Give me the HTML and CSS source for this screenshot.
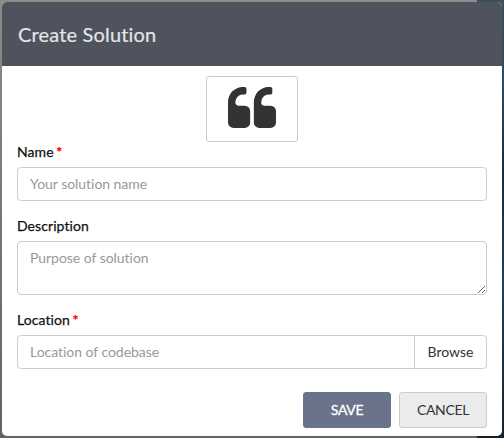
FILE: index.html
```html
<!DOCTYPE html>
<html lang="en">
<head>
<meta charset="utf-8">
<title>Create Solution</title>
<link rel="stylesheet" href="styles.css">
</head>
<body>
<main class="modal">
  <header class="modal-header"><h1>Create Solution</h1></header>
  <form class="modal-body">
    <div class="icon-box">
      <svg class="quote" viewBox="0 128 1664 1408" preserveAspectRatio="none" aria-hidden="true">
        <path d="M768 960v384q0 80-56 136t-136 56h-384q-80 0-136-56t-56-136v-704q0-104 40.5-198.5t109.5-163.5 163.5-109.5 198.5-40.5h64q26 0 45 19t19 45v128q0 26-19 45t-45 19h-64q-106 0-181 75t-75 181v32q0 40 28 68t68 28h224q80 0 136 56t56 136zm896 0v384q0 80-56 136t-136 56h-384q-80 0-136-56t-56-136v-704q0-104 40.5-198.5t109.5-163.5 163.5-109.5 198.5-40.5h64q26 0 45 19t19 45v128q0 26-19 45t-45 19h-64q-106 0-181 75t-75 181v32q0 40 28 68t68 28h224q80 0 136 56t56 136z"/>
      </svg>
    </div>
    <div class="field">
      <label for="name">Name <span class="required">*</span></label>
      <input class="control" id="name" type="text" placeholder="Your solution name">
    </div>
    <div class="field">
      <label for="description">Description</label>
      <textarea class="control area" id="description" placeholder="Purpose of solution"></textarea>
    </div>
    <div class="field">
      <label for="location">Location <span class="required">*</span></label>
      <div class="group">
        <input class="control" id="location" type="text" placeholder="Location of codebase">
        <button class="browse" type="button">Browse</button>
      </div>
    </div>
    <footer class="actions">
      <button class="btn save" type="button">SAVE</button>
      <button class="btn cancel" type="button">CANCEL</button>
    </footer>
  </form>
</main>
</body>
</html>
```
FILE: styles.css
```css
* { box-sizing: border-box; font-variant-ligatures: none; }
html { height: 100%; }
body {
  margin: 0;
  height: 438px;
  padding: 2px;
  overflow: hidden;
  font: 14px/20px Lato, sans-serif;
  color: #111;
  background:
    linear-gradient(#3b4e5b, #354b5b 18%, #1b2b38 40%, #273f50 65%, #17212b) right / 27px 100% no-repeat,
    linear-gradient(#8c8c8a, #777 50%, #656263);
}
.modal {
  width: 500px;
  height: 434px;
  border-radius: 5px;
  overflow: hidden;
  background: #fff;
}
.modal-header {
  height: 64px;
  padding: 0 16px;
  display: flex;
  align-items: center;
  background: #4f535e;
}
h1 {
  margin: 0;
  font-size: 20px;
  line-height: 24px;
  font-weight: 400;
  letter-spacing: 0.17px;
  color: #e4e5e8;
  -webkit-text-stroke: 0.2px currentColor;
}
.modal-body {
  padding: 10px 15px 8px;
  display: flex;
  flex-direction: column;
}
.icon-box {
  width: 92px;
  height: 66px;
  align-self: center;
  display: flex;
  align-items: center;
  justify-content: center;
  padding-bottom: 3px;
  border: 1px solid #ccc;
  border-radius: 3px;
}
.quote { width: 48px; height: 41px; fill: #333; }
.field { display: flex; flex-direction: column; margin-bottom: 15px; }
label { height: 25px; letter-spacing: 0.07px; -webkit-text-stroke: 0.25px currentColor; }
.required { color: #f00; margin-left: -1px; font-weight: 700; }
.control {
  display: block;
  width: 100%;
  height: 34px;
  margin: 0;
  padding: 5px 12px 7px;
  border: 1px solid #ccc;
  border-radius: 4px;
  outline: 0;
  background: #fff;
  font: inherit;
  letter-spacing: -0.04px;
}
.control::placeholder { color: #999; opacity: 1; }
.area { height: 54px; padding-top: 6px; resize: vertical; }
.group { display: flex; }
.group .control { border-radius: 4px 0 0 4px; }
.browse {
  flex: 0 0 73px;
  height: 34px;
  margin-left: -1px;
  padding: 0;
  border: 1px solid #ccc;
  border-radius: 0 4px 4px 0;
  background: #fff;
  color: #333;
  font: inherit;
}
.actions { display: flex; justify-content: flex-end; gap: 8px; margin-top: 8px; }
.btn {
  width: 88px;
  height: 36px;
  padding: 0;
  border: 1px solid #ccc;
  border-radius: 3px;
  font: inherit;
  letter-spacing: -0.35px;
}
.save { background: #69738a; border-color: #69738a; color: #fff; -webkit-text-stroke: 0.3px #fff; }
.cancel { background: #ebebeb; color: #333; }
```
